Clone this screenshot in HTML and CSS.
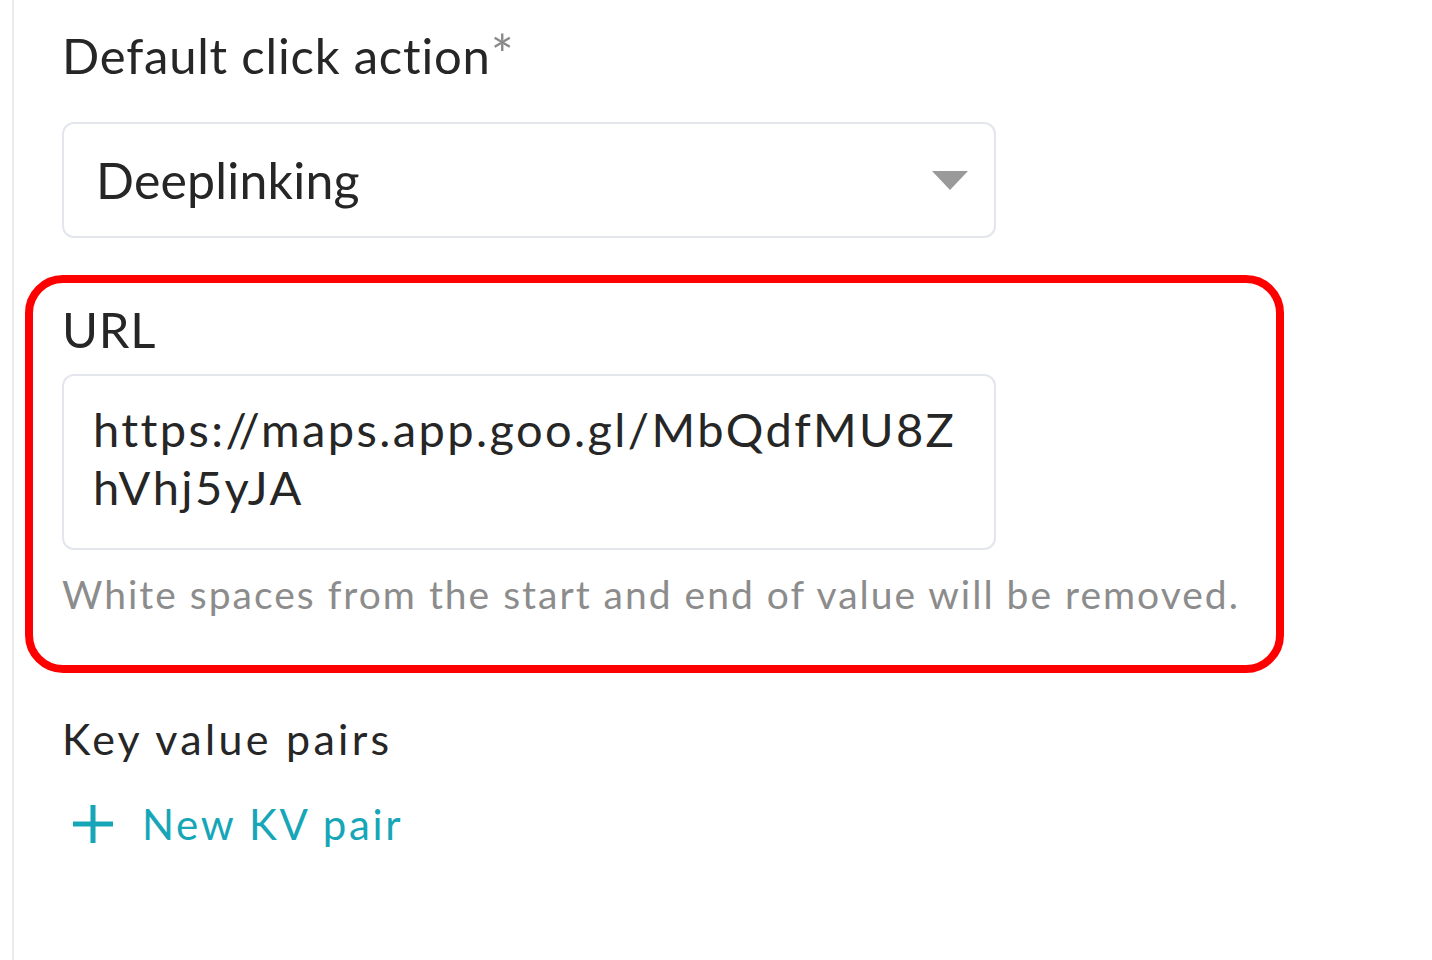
FILE: index.html
```html
<!DOCTYPE html>
<html lang="en">
<head>
  <meta charset="UTF-8">
  <title>Click action</title>
  <link rel="stylesheet" href="styles.css">
</head>
<body>

  <div class="panel">

    <div class="field">
      <label class="label">Default click action<span class="req">*</span></label>
      <div class="select">
        <span>Deeplinking</span>
        <span class="caret"></span>
      </div>
    </div>

    <div class="highlight">
      <label class="label">URL</label>
      <div class="textbox">https://maps.app.goo.gl/MbQdfMU8ZhVhj5yJA</div>
      <p class="hint">White spaces from the start and end of value will be removed.</p>
    </div>

    <div class="kv">
      <div class="kv-title">Key value pairs</div>
      <a class="add-link" href="#">
        <svg width="40" height="38" viewBox="0 0 40 38">
          <path d="M20 0 V38 M0 19 H40" stroke="currentColor" stroke-width="5" fill="none"/>
        </svg>
        New KV pair
      </a>
    </div>

  </div>

</body>
</html>
```

FILE: styles.css
```css
body {
  margin: 0;
  background: #fff;
  font-family: Lato, "Open Sans", sans-serif;
  color: #262626;
}
.panel {
  margin-left: 12px;
  min-height: 960px;
  border-left: 2px solid #ececf0;
  padding: 24px 0 0 48px;
  box-sizing: border-box;
}
.label {
  display: block;
  font-size: 49px;
  line-height: 60px;
  letter-spacing: 0.8px;
}
.req {
  color: #8a8a8a;
  font-size: 54px;
  letter-spacing: 0;
}
.select {
  margin-top: 37px;
  width: 934px;
  height: 116px;
  box-sizing: border-box;
  border: 2px solid #e3e6ec;
  border-radius: 12px;
  display: flex;
  align-items: center;
  justify-content: space-between;
  padding: 0 26px 0 32px;
  font-size: 50px;
  letter-spacing: 0.2px;
}
.caret {
  width: 0;
  height: 0;
  border-left: 18px solid transparent;
  border-right: 18px solid transparent;
  border-top: 19px solid #9a9a9a;
}
.highlight {
  margin: 37px 0 0 -37px;
  width: 1259px;
  box-sizing: border-box;
  border: 8px solid #ff0000;
  border-radius: 38px;
  padding: 16px 0 45px 29px;
}
.textbox {
  margin-top: 15px;
  width: 934px;
  height: 176px;
  box-sizing: border-box;
  border: 2px solid #e3e6ec;
  border-radius: 12px;
  padding: 24px 29px;
  font-size: 47px;
  line-height: 58px;
  letter-spacing: 2.4px;
  word-break: break-all;
}
.hint {
  margin: 18px 0 0;
  font-size: 39px;
  line-height: 52px;
  letter-spacing: 2px;
  color: #8c8c8c;
}
.kv {
  margin-top: 40px;
}
.kv-title {
  font-size: 43px;
  line-height: 52px;
  letter-spacing: 3.3px;
}
.add-link {
  display: flex;
  align-items: center;
  gap: 29px;
  margin-top: 34px;
  margin-left: 11px;
  color: #16a6b7;
  text-decoration: none;
  font-size: 42px;
  letter-spacing: 2.7px;
}
```
